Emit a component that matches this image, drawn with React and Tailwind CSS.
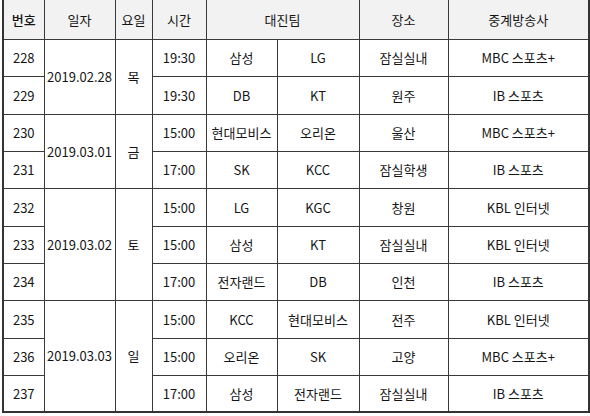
import React from 'react';

const rows = [
  { no: 228, date: '2019.02.28', day: '목', span: 2, time: '19:30', home: '삼성', away: 'LG', place: '잠실실내', tv: 'MBC 스포츠+', h: 'h-[37px]' },
  { no: 229, time: '19:30', home: 'DB', away: 'KT', place: '원주', tv: 'IB 스포츠', h: 'h-[38px]' },
  { no: 230, date: '2019.03.01', day: '금', span: 2, time: '15:00', home: '현대모비스', away: '오리온', place: '울산', tv: 'MBC 스포츠+', h: 'h-[37px]' },
  { no: 231, time: '17:00', home: 'SK', away: 'KCC', place: '잠실학생', tv: 'IB 스포츠', h: 'h-[37px]' },
  { no: 232, date: '2019.03.02', day: '토', span: 3, time: '15:00', home: 'LG', away: 'KGC', place: '창원', tv: 'KBL 인터넷', h: 'h-[38px]' },
  { no: 233, time: '15:00', home: '삼성', away: 'KT', place: '잠실실내', tv: 'KBL 인터넷', h: 'h-[37px]' },
  { no: 234, time: '17:00', home: '전자랜드', away: 'DB', place: '인천', tv: 'IB 스포츠', h: 'h-[37px]' },
  { no: 235, date: '2019.03.03', day: '일', span: 3, time: '15:00', home: 'KCC', away: '현대모비스', place: '전주', tv: 'KBL 인터넷', h: 'h-[38px]' },
  { no: 236, time: '15:00', home: '오리온', away: 'SK', place: '고양', tv: 'MBC 스포츠+', h: 'h-[37px]' },
  { no: 237, time: '17:00', home: '삼성', away: '전자랜드', place: '잠실실내', tv: 'IB 스포츠', h: 'h-[37px]' },
];

const td = 'border border-[#3a3a3a] text-center align-middle p-0 whitespace-nowrap';

export default function App() {
  return (
    <div className="w-[590px] h-[416px] bg-white overflow-hidden pl-[2px]" style={{ fontFamily: '"Noto Sans CJK KR", "Noto Sans", sans-serif' }}>
      <table className="table-fixed border-collapse w-[586px] text-[13px] text-[#151515] border-2 border-[#333] border-t-0 leading-none">
        <colgroup>
          <col className="w-[41px]" />
          <col className="w-[71px]" />
          <col className="w-[37px]" />
          <col className="w-[54px]" />
          <col className="w-[71px]" />
          <col className="w-[82px]" />
          <col className="w-[89px]" />
          <col className="w-[141px]" />
        </colgroup>
        <thead>
          <tr className="h-[39px] bg-[#f2f2f2]">
            <th className={`${td} border-t-0 font-medium`}>번호</th>
            <th className={`${td} border-t-0 font-normal`}>일자</th>
            <th className={`${td} border-t-0 font-normal`}>요일</th>
            <th className={`${td} border-t-0 font-normal`}>시간</th>
            <th colSpan={2} className={`${td} border-t-0 font-normal`}>대진팀</th>
            <th className={`${td} border-t-0 font-normal`}>장소</th>
            <th className={`${td} border-t-0 font-normal`}>중계방송사</th>
          </tr>
        </thead>
        <tbody>
          {rows.map(r => (
            <tr key={r.no} className={r.h}>
              <td className={td}>{r.no}</td>
              {r.span && <td rowSpan={r.span} className={td}>{r.date}</td>}
              {r.span && <td rowSpan={r.span} className={td}>{r.day}</td>}
              <td className={td}>{r.time}</td>
              <td className={td}>{r.home}</td>
              <td className={td}>{r.away}</td>
              <td className={td}>{r.place}</td>
              <td className={td}>{r.tv}</td>
            </tr>
          ))}
        </tbody>
      </table>
    </div>
  );
}
